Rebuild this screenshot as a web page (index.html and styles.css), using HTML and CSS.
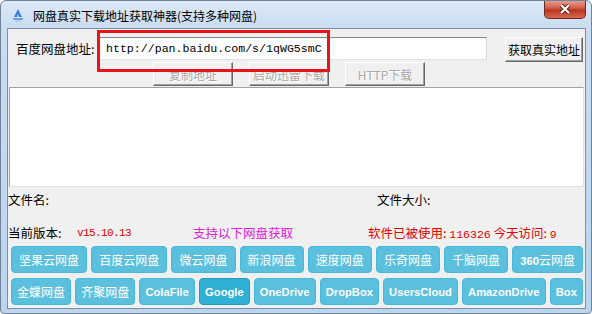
FILE: index.html
```html
<!DOCTYPE html>
<html lang="zh-CN">
<head>
    <meta charset="UTF-8">
    <title>网盘真实下载地址获取神器</title>
    <link rel="stylesheet" href="styles.css">
</head>
<body>
    <div class="window">
        <div class="titlebar">
            <svg class="app-icon" width="14" height="14" viewBox="0 0 14 14">
                <path d="M7 1 L3 9 L6 9 L7 6 L8 9 L11 9 Z" fill="#3a7fd0"/>
                <path d="M2 11 L12 11" stroke="#5a8ccf" stroke-width="1.5"/>
                <path d="M4 13 L10 13" stroke="#9bbbe0" stroke-width="1"/>
            </svg>
            <span class="title">网盘真实下载地址获取神器(支持多种网盘)</span>
            <div class="close-btn">
                <svg width="14" height="10" viewBox="0 0 14 10">
                    <path d="M3 1 L11 9 M11 1 L3 9" stroke="#5a1a12" stroke-width="4"/>
                    <path d="M3 1 L11 9 M11 1 L3 9" stroke="#fff" stroke-width="2.2"/>
                </svg>
            </div>
        </div>

        <div class="client">
            <div class="url-row">
                <span class="url-label">百度网盘地址:</span>
                <div class="url-input">http://pan.baidu.com/s/1qWG5smC</div>
                <button class="win-btn get-btn">获取真实地址</button>
            </div>

            <div class="action-row">
                <button class="win-btn disabled">复制地址</button>
                <button class="win-btn disabled">启动迅雷下载</button>
                <button class="win-btn disabled">HTTP下载</button>
            </div>

            <div class="result-box"></div>

            <div class="file-row">
                <span class="file-name">文件名:</span>
                <span>文件大小:</span>
            </div>

            <div class="info-row">
                <span class="info-label">当前版本:</span>
                <span class="version">v15.10.13</span>
                <span class="support">支持以下网盘获取</span>
                <span class="usage">软件已被使用: <span class="num">116326</span> 今天访问: <span class="num">9</span></span>
            </div>

            <div class="disk-row">
                <button class="disk-btn">坚果云网盘</button>
                <button class="disk-btn">百度云网盘</button>
                <button class="disk-btn">微云网盘</button>
                <button class="disk-btn">新浪网盘</button>
                <button class="disk-btn">速度网盘</button>
                <button class="disk-btn">乐奇网盘</button>
                <button class="disk-btn">千脑网盘</button>
                <button class="disk-btn"><b>360</b>云网盘</button>
            </div>
            <div class="disk-row">
                <button class="disk-btn">金蝶网盘</button>
                <button class="disk-btn">齐聚网盘</button>
                <button class="disk-btn latin">ColaFile</button>
                <button class="disk-btn latin active">Google</button>
                <button class="disk-btn latin">OneDrive</button>
                <button class="disk-btn latin">DropBox</button>
                <button class="disk-btn latin">UsersCloud</button>
                <button class="disk-btn latin">AmazonDrive</button>
                <button class="disk-btn latin">Box</button>
            </div>
        </div>

        <!-- red annotation box -->
        <div class="highlight"></div>
    </div>
</body>
</html>
```

FILE: styles.css
```css
body {
    margin: 0;
    font-family: "Noto Sans CJK SC", "Liberation Sans", sans-serif;
    font-size: 12px;
    background: #ffffff;
}

.window {
    position: relative;
    width: 592px;
    height: 314px;
    box-sizing: border-box;
    border: 1px solid #6f8296;
    border-radius: 6px 6px 4px 4px;
    background: linear-gradient(to bottom, #dde9f6 0px, #c9dcf1 28px, #bcd4ee 100%);
    padding: 0 5px 5px 6px;
    overflow: hidden;
}

/* Title bar */
.titlebar {
    height: 27px;
    display: flex;
    align-items: center;
    position: relative;
}

.app-icon {
    margin: 0 8px 0 4px;
}

.title {
    color: #000;
    font-size: 12px;
    margin-top: 1px;
}

.close-btn {
    position: absolute;
    top: -1px;
    right: 0;
    width: 40px;
    height: 18px;
    border: 1px solid #6b2a22;
    border-top: none;
    border-radius: 0 0 5px 5px;
    background: linear-gradient(to bottom, #e8a593 0%, #d0604c 45%, #b8341f 55%, #d86a50 100%);
    display: flex;
    justify-content: center;
    align-items: center;
}

/* Client area */
.client {
    height: 279px;
    border: 1px solid #7c8ea1;
    background: #f0f0f0;
    display: flex;
    flex-direction: column;
}

.url-row {
    display: flex;
    align-items: flex-start;
    margin-top: 8px;
    height: 25px;
}

.url-label {
    width: 81px;
    padding-left: 8px;
    line-height: 23px;
    font-size: 12.5px;
}

.url-input {
    height: 21px;
    line-height: 21px;
    background: #fff;
    border: 1px solid;
    border-color: #828790 #d5d5d5 #e3e3e3 #a0a0a0;
    font-family: "Liberation Mono", monospace;
    font-size: 11.6px;
    padding-left: 8px;
    width: 380px;
}

.win-btn {
    font-family: "Noto Sans CJK SC", sans-serif;
    font-size: 12px;
    background: #f0f0f0;
    border: 1px solid;
    border-color: #ffffff #696969 #696969 #ffffff;
    box-shadow: inset -1px -1px 0 #a0a0a0;
    padding: 0;
    height: 24px;
    white-space: nowrap;
}

.get-btn {
    margin-left: 18px;
    width: 78px;
    height: 25px;
    color: #000;
}

.action-row {
    display: flex;
    gap: 16px;
    padding-left: 145px;
    height: 24px;
}

.action-row .win-btn {
    width: 80px;
}

.win-btn.disabled {
    color: #a8a8a8;
    text-shadow: 1px 1px 0 #ffffff;
}

.result-box {
    margin: 1px 1px 0 1px;
    height: 98px;
    background: #fff;
    border: 1px solid;
    border-color: #a0a0a0 #e3e3e3 #e3e3e3 #a0a0a0;
}

.file-row {
    margin-top: 5px;
    height: 16px;
    line-height: 16px;
    display: flex;
    font-size: 12.5px;
}

.file-name {
    width: 369px;
}

.info-row {
    margin-top: 17px;
    height: 16px;
    line-height: 16px;
    display: flex;
    font-size: 12.5px;
}

.info-label {
    width: 69px;
}

.version {
    width: 116px;
    color: #d40000;
    font-family: "Liberation Mono", monospace;
    font-size: 11px;
    letter-spacing: -0.6px;
}

.support {
    width: 175px;
    color: #e020d8;
}

.usage {
    color: #e00000;
}

.usage .num {
    font-family: "Liberation Mono", monospace;
    font-size: 11.5px;
}

/* Netdisk buttons */
.disk-row {
    display: flex;
    gap: 4px;
    padding: 0 2px 0 3px;
    height: 27px;
    margin-top: 5px;
}

.disk-row:first-of-type {
    margin-top: 6px;
}

.disk-btn {
    flex: 1 1 auto;
    padding: 0 4px;
    background: #5bc0de;
    border: 1px solid #46b8da;
    border-radius: 4px;
    color: #fff;
    font-family: "Noto Sans CJK SC", sans-serif;
    font-size: 12px;
    white-space: nowrap;
}

.disk-btn.latin, .disk-btn b {
    font-family: "Liberation Sans", sans-serif;
    font-weight: bold;
    font-size: 11.2px;
}

.disk-btn.active {
    background: #31b0d5;
    border-color: #269abc;
}

/* red annotation rectangle */
.highlight {
    position: absolute;
    left: 96px;
    top: 29px;
    width: 227px;
    height: 36px;
    border: 3px solid #e8141a;
}
```
